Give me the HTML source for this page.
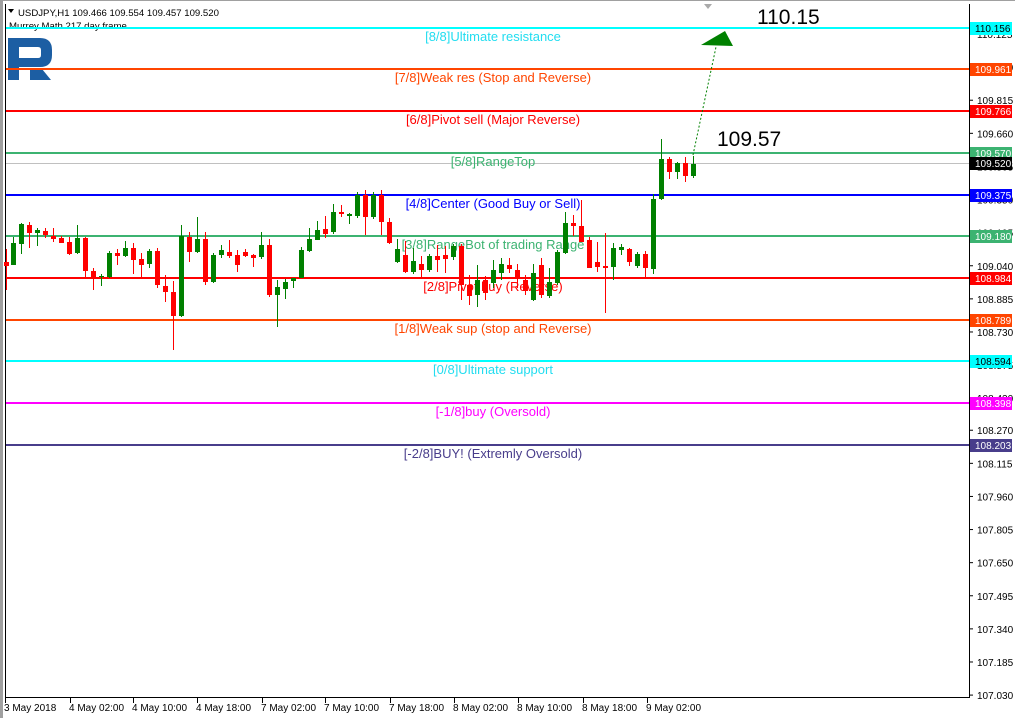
<!DOCTYPE html>
<html><head><meta charset="utf-8"><style>
body{margin:0;width:1015px;height:718px;background:#fff;overflow:hidden;font-family:"Liberation Sans",sans-serif}
svg{position:absolute;left:0;top:0}
</style></head><body>
<svg id="s" width="1015" height="718" xmlns="http://www.w3.org/2000/svg" font-family="Liberation Sans, sans-serif">
<rect x="0" y="0" width="3" height="718" fill="#a0a0a0"/>
<line x1="0" y1="0.5" x2="1015" y2="0.5" stroke="#a0a0a0"/>
<line x1="5.5" y1="4" x2="5.5" y2="698" stroke="#000"/>
<line x1="969.5" y1="4" x2="969.5" y2="698" stroke="#000"/>
<line x1="5" y1="697.5" x2="970" y2="697.5" stroke="#000"/>
<polygon points="704,4 712,4 708,9" fill="#aaa"/>
<g font-size="9.6" fill="#000">
<polygon points="8,9 14,9 11,13" fill="#000"/>
<text x="18" y="16">USDJPY,H1  109.466 109.554 109.457 109.520</text>
<text x="9" y="29">Murrey Math 217 day frame</text>
</g>
<!-- logo -->
<path d="M8 38H40Q52 38 52 50V55Q52 67 40 67H19V80H8Z M19 47V58H38Q41 58 41 55V50Q41 47 38 47Z" fill="#1c5ea3" fill-rule="evenodd"/>
<path d="M30 69H42L51 80H30Z" fill="#1c5ea3"/>
<g id="lv"></g>
<g id="cd"></g>
<line x1="693" y1="155" x2="716" y2="47" stroke="#008000" stroke-width="1" stroke-dasharray="2,2"/>
<polygon points="701,45 733,46 725,31" fill="#008000"/>
<text x="757" y="24" font-size="21" fill="#000">110.15</text>
<text x="717" y="146" font-size="21" fill="#000">109.57</text>
<g id="ax" font-size="10" fill="#000"></g>
</svg>
<script>
var s=document.getElementById('s'),NS='http://www.w3.org/2000/svg';
function el(p,t,a,tx){var e=document.createElementNS(NS,t);for(var k in a)e.setAttribute(k,a[k]);if(tx!==undefined)e.textContent=tx;document.getElementById(p).appendChild(e);return e;}
var L=[[28,'#00ffff','#22ddf0','[8/8]Ultimate resistance','110.156','#000'],
[69,'#ff4500','#ff4500','[7/8]Weak res (Stop and Reverse)','109.961','#fff'],
[111,'#ff0000','#ff0000','[6/8]Pivot sell (Major Reverse)','109.766','#fff'],
[153,'#3cb371','#3cb371','[5/8]RangeTop','109.570','#fff'],
[195,'#0000ff','#0000ff','[4/8]Center (Good Buy or Sell)','109.375','#fff'],
[236,'#3cb371','#3cb371','[3/8]RangeBot of trading Range','109.180','#fff'],
[278,'#ff0000','#ff0000','[2/8]Pivot buy (Reverse)','108.984','#fff'],
[320,'#ff4500','#ff4500','[1/8]Weak sup (stop and Reverse)','108.789','#fff'],
[361,'#00ffff','#22ddf0','[0/8]Ultimate support','108.594','#000'],
[403,'#ff00ff','#ff00ff','[-1/8]buy (Oversold)','108.398','#fff'],
[445,'#483d8b','#483d8b','[-2/8]BUY! (Extremly Oversold)','108.203','#fff']];
el('lv','line',{x1:6,y1:163.5,x2:969,y2:163.5,stroke:'#c0c0c0'});
L.forEach(function(l){el('lv','line',{x1:6,y1:l[0],x2:969,y2:l[0],stroke:l[1],'stroke-width':2});
el('lv','text',{x:493,y:l[0]+13,'text-anchor':'middle','font-size':13,fill:l[2]},l[3]);});
var C=[[6,262,266,249,290,0],[13,243,265,237,265,1],[21,224,244,223,254,1],[29,225,233,222,248,0],[37,230,233,228,246,1],[45,231,235,228,238,0],[53,236,239,228,242,0],[61,238,243,236,243,0],[69,242,254,237,255,0],[77,238,253,225,254,1],[85,238,271,237,278,0],[93,271,278,268,290,0],[101,276,277,274,286,1],[109,253,277,251,278,1],[117,253,256,249,265,0],[125,248,256,241,257,1],[133,248,260,243,274,0],[141,259,265,253,277,0],[149,251,264,249,268,1],[157,251,285,248,288,0],[165,286,292,275,302,0],[173,292,316,281,350,0],[181,236,316,225,317,1],[189,237,252,232,262,0],[197,239,252,217,253,1],[205,239,282,232,285,0],[213,255,282,253,283,1],[221,250,255,245,258,1],[229,252,256,240,258,0],[237,255,265,250,272,0],[245,252,256,249,257,0],[253,255,258,254,267,0],[261,245,257,232,259,1],[269,245,295,239,297,0],[277,287,295,280,327,1],[285,282,289,279,299,1],[293,278,281,278,288,1],[301,250,278,247,278,1],[309,239,251,228,252,1],[317,230,240,221,240,1],[325,229,234,216,238,0],[333,212,232,204,234,1],[341,212,214,205,217,0],[349,214,216,213,224,1],[357,195,216,192,218,1],[365,195,217,190,235,0],[373,195,217,192,219,1],[381,195,222,190,235,0],[389,222,243,218,244,0],[397,249,262,239,263,1],[405,255,272,241,273,0],[413,261,272,248,274,1],[421,264,270,256,278,0],[429,256,270,254,272,1],[437,256,260,245,272,0],[445,255,259,246,273,0],[453,246,257,244,260,1],[461,246,285,244,300,0],[469,285,296,275,305,0],[477,280,295,265,307,1],[485,280,293,276,300,0],[493,270,283,260,288,1],[501,264,273,258,280,1],[509,265,269,258,273,0],[517,270,278,264,288,0],[525,280,291,275,295,0],[533,273,300,264,301,1],[541,265,295,258,298,0],[549,282,296,268,298,1],[557,252,283,250,285,1],[565,223,253,212,254,1],[573,223,226,215,236,0],[581,226,242,200,242,0],[589,240,268,237,268,0],[597,262,267,242,272,0],[605,266,268,233,313,0],[613,248,267,243,280,1],[621,247,250,244,255,1],[629,249,262,248,266,0],[637,254,266,252,268,1],[645,254,268,251,278,0],[653,199,269,194,274,1],[661,159,199,139,200,1],[669,159,172,157,179,0],[677,163,172,162,179,1],[685,163,176,157,182,0],[693,164,176,156,178,1]];
C.forEach(function(c){var col=c[5]?'#008000':'#ff0000';
el('cd','line',{x1:c[0]+.5,y1:c[3],x2:c[0]+.5,y2:c[4],stroke:col});
el('cd','rect',{x:c[0]-2,y:c[1],width:5,height:Math.max(1,c[2]-c[1]),fill:col});});
var P=['110.125','109.970','109.815','109.660','109.505','109.350','109.195','109.040','108.885','108.730','108.575','108.420','108.270','108.115','107.960','107.805','107.650','107.495','107.340','107.185','107.030'];
P.forEach(function(p){var y=34+(110.125-parseFloat(p))*213.6;
el('ax','line',{x1:969,y1:y,x2:973,y2:y,stroke:'#000'});
el('ax','text',{x:977,y:y+4},p);});
L.forEach(function(l){el('ax','rect',{x:970,y:l[0]-6,width:42,height:13,fill:l[1]});
el('ax','text',{x:975,y:l[0]+4,fill:l[5]},l[4]);});
el('ax','rect',{x:970,y:157,width:42,height:13,fill:'#000'});
el('ax','text',{x:975,y:167,fill:'#fff'},'109.520');
var T=[[5,'3 May 2018'],[70,'4 May 02:00'],[133,'4 May 10:00'],[197,'4 May 18:00'],[262,'7 May 02:00'],[325,'7 May 10:00'],[390,'7 May 18:00'],[454,'8 May 02:00'],[518,'8 May 10:00'],[583,'8 May 18:00'],[647,'9 May 02:00']];
T.forEach(function(t){el('ax','line',{x1:t[0]+.5,y1:698,x2:t[0]+.5,y2:703,stroke:'#000'});
el('ax','text',{x:t[0]-1,y:711},t[1]);});
</script>
</body></html>
